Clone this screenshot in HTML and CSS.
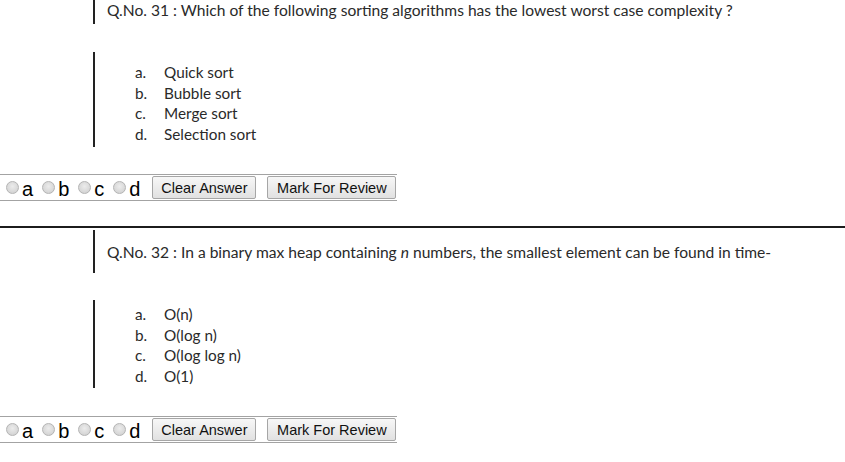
FILE: index.html
```html
<!DOCTYPE html>
<html>
<head>
<meta charset="utf-8">
<link rel="stylesheet" href="styles.css">
</head>
<body>
<div class="question q1">
  <div class="q-head">Q.No. 31 : Which of the following sorting algorithms has the lowest worst case complexity ?</div>
  <div class="q-opts">
    <div class="opt"><span class="lbl">a.</span><span>Quick sort</span></div>
    <div class="opt"><span class="lbl">b.</span><span>Bubble sort</span></div>
    <div class="opt"><span class="lbl">c.</span><span>Merge sort</span></div>
    <div class="opt"><span class="lbl">d.</span><span>Selection sort</span></div>
  </div>
  <div class="ctrl">
    <span class="radio first"></span><span class="letter">a</span>
    <span class="radio"></span><span class="letter">b</span>
    <span class="radio"></span><span class="letter">c</span>
    <span class="radio"></span><span class="letter">d</span>
    <button class="btn btn-clear">Clear Answer</button>
    <button class="btn btn-mark">Mark For Review</button>
  </div>
</div>
<div class="divider"></div>
<div class="question q2">
  <div class="q-head">Q.No. 32 : In a binary max heap containing <i>n</i> numbers, the smallest element can be found in time-</div>
  <div class="q-opts">
    <div class="opt"><span class="lbl">a.</span><span>O(n)</span></div>
    <div class="opt"><span class="lbl">b.</span><span>O(log n)</span></div>
    <div class="opt"><span class="lbl">c.</span><span>O(log log n)</span></div>
    <div class="opt"><span class="lbl">d.</span><span>O(1)</span></div>
  </div>
  <div class="ctrl">
    <span class="radio first"></span><span class="letter">a</span>
    <span class="radio"></span><span class="letter">b</span>
    <span class="radio"></span><span class="letter">c</span>
    <span class="radio"></span><span class="letter">d</span>
    <button class="btn btn-clear">Clear Answer</button>
    <button class="btn btn-mark">Mark For Review</button>
  </div>
</div>
</body>
</html>
```
FILE: styles.css
```css
html, body {
  margin: 0;
  padding: 0;
  background: #fff;
}
body {
  width: 845px;
  height: 462px;
  overflow: hidden;
}
.q-head {
  margin-left: 93px;
  border-left: 2px solid #222;
  padding-left: 12px;
  font-family: Lato, "Open Sans", sans-serif;
  font-size: 15.6px;
  line-height: 18px;
  color: #2a2a2a;
  box-sizing: border-box;
  white-space: nowrap;
}
.q1 .q-head {
  height: 24px;
  padding-top: 1px;
}
.q2 .q-head {
  height: 43px;
  padding-top: 13px;
  margin-top: 2px;
}
.q-opts {
  margin-left: 93px;
  border-left: 2px solid #222;
  padding-left: 40px;
  font-family: Lato, "Open Sans", sans-serif;
  font-size: 15.3px;
  line-height: 20.7px;
  color: #2a2a2a;
  box-sizing: border-box;
  margin-top: 28px;
}
.q1 .q-opts {
  height: 95px;
  padding-top: 10px;
}
.q2 .q-opts {
  height: 88px;
  padding-top: 4px;
  margin-top: 27px;
}
.opt {
  display: flex;
}
.lbl {
  width: 29px;
}
.ctrl {
  display: flex;
  align-items: center;
  width: 397px;
  height: 25px;
  border-top: 1px solid #a3a3a3;
  border-bottom: 1px solid #a3a3a3;
  font-family: "Liberation Sans", Arial, sans-serif;
  font-size: 20px;
  color: #000;
  margin-top: 27px;
}
.q2 .ctrl {
  margin-top: 28px;
}
.radio {
  width: 11px;
  height: 11px;
  border: 1px solid #b4b4b4;
  border-radius: 50%;
  background: radial-gradient(circle at 50% 40%, #ececec 0%, #d6d6d6 70%, #cacaca 100%);
  margin: 0 3px 0 9px;
  flex: none;
}
.radio.first {
  margin-left: 6px;
}
.letter {
  line-height: 22px;
  padding-top: 2px;
}
.btn {
  font-family: "Liberation Sans", Arial, sans-serif;
  font-size: 14.5px;
  color: #111;
  height: 23px;
  padding: 0;
  border: 1px solid #a6a6a6;
  border-radius: 2px;
  background: linear-gradient(#f7f7f7, #e1e1e1);
  text-align: center;
  box-sizing: border-box;
}
.btn-clear {
  width: 104px;
  margin-left: 12px;
}
.btn-mark {
  width: 129px;
  margin-left: 11px;
}
.divider {
  margin-top: 25px;
  height: 2px;
  background: #1c1c1c;
}
```
